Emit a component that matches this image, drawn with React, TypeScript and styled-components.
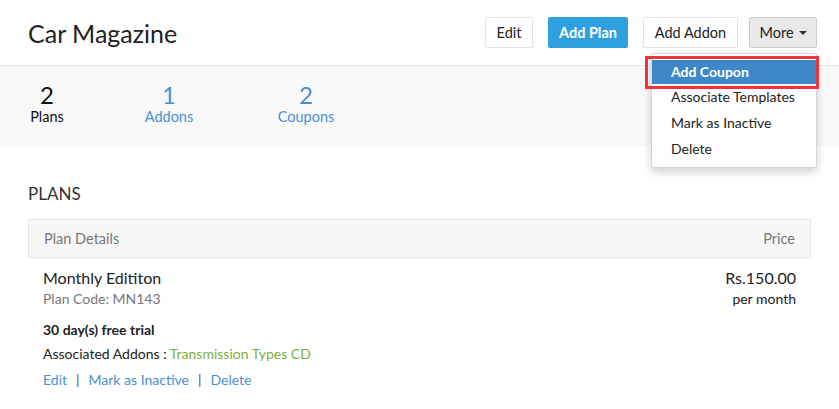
import styled, { createGlobalStyle } from "styled-components";

const GlobalStyle = createGlobalStyle`
  html, body {
    margin: 0;
    padding: 0;
    background: #ffffff;
    font-family: Lato, "Open Sans", sans-serif;
    color: #222;
  }
`;

const Page = styled.div`
  width: 839px;
  height: 409px;
  overflow: hidden;
  position: relative;
`;

const Header = styled.div`
  height: 66px;
  box-sizing: border-box;
  border-bottom: 1px solid #e8e8e8;
  display: flex;
  align-items: center;
  justify-content: space-between;
  padding: 0 22px 0 28px;
`;

const Title = styled.h1`
  margin: 0;
  font-size: 25px;
  font-weight: 400;
  color: #222;
`;

const Actions = styled.div`
  display: flex;
  align-items: center;
`;

const Btn = styled.div<{ $variant?: "primary" | "muted"; $gap?: number; $width: number }>`
  width: ${(p) => p.$width}px;
  height: 31px;
  box-sizing: border-box;
  margin-left: ${(p) => p.$gap ?? 15}px;
  display: flex;
  align-items: center;
  justify-content: center;
  font-size: 14.5px;
  border-radius: 2px;
  border: 1px solid
    ${(p) => (p.$variant === "primary" ? "#2ea0e0" : p.$variant === "muted" ? "#cdcdcd" : "#e2e2e2")};
  background: ${(p) => (p.$variant === "primary" ? "#2ea0e0" : p.$variant === "muted" ? "#e9e9e9" : "#fff")};
  color: ${(p) => (p.$variant === "primary" ? "#fff" : "#222")};
  font-weight: ${(p) => (p.$variant === "primary" ? 700 : 400)};
`;

const Caret = styled.span`
  display: inline-block;
  margin-left: 5px;
  width: 0;
  height: 0;
  border-left: 4px solid transparent;
  border-right: 4px solid transparent;
  border-top: 4px solid #333;
`;

const Stats = styled.div`
  height: 80px;
  background: #f9f9f9;
  display: flex;
  align-items: flex-start;
  padding-top: 16px;
  box-sizing: border-box;
`;

const Stat = styled.div<{ $width: number; $active?: boolean }>`
  width: ${(p) => p.$width}px;
  display: flex;
  flex-direction: column;
  align-items: center;
  color: ${(p) => (p.$active ? "#111" : "#4a8fd0")};
`;

const StatNum = styled.div`
  font-size: 24px;
  line-height: 26px;
`;

const StatLabel = styled.div`
  font-size: 14.5px;
  line-height: 18px;
`;

const Section = styled.div`
  padding: 38px 28px 0 28px;
`;

const SectionTitle = styled.div`
  font-size: 17px;
  color: #333;
  text-transform: uppercase;
  line-height: 20px;
`;

const Table = styled.div`
  margin-top: 15px;
  width: 783px;
`;

const TableHead = styled.div`
  height: 39px;
  box-sizing: border-box;
  background: #f7f7f7;
  border: 1px solid #e6e6e6;
  display: flex;
  align-items: center;
  justify-content: space-between;
  padding: 0 15px;
  font-size: 14.5px;
  color: #777;
`;

const Row = styled.div`
  display: flex;
  justify-content: space-between;
  padding: 10px 15px 0 15px;
`;

const Details = styled.div`
  display: flex;
  flex-direction: column;
`;

const PlanName = styled.div`
  font-size: 16px;
  line-height: 20px;
  color: #222;
`;

const PlanCode = styled.div`
  margin-top: 1px;
  font-size: 14px;
  line-height: 20px;
  color: #777;
`;

const Trial = styled.div`
  margin-top: 11px;
  font-size: 14px;
  font-weight: 700;
  color: #222;
  line-height: 20px;
`;

const Addons = styled.div`
  margin-top: 4px;
  font-size: 14px;
  color: #222;
  line-height: 20px;
`;

const Green = styled.span`
  color: #7bb03e;
`;

const Links = styled.div`
  margin-top: 6px;
  font-size: 14px;
  line-height: 20px;
  color: #4a8fd0;
  display: flex;
  gap: 9px;
`;

const Sep = styled.span`
  color: #555;
`;

const Price = styled.div`
  display: flex;
  flex-direction: column;
  align-items: flex-end;
`;

const Amount = styled.div`
  font-size: 16px;
  line-height: 20px;
  color: #222;
`;

const Per = styled.div`
  margin-top: 1px;
  font-size: 14px;
  line-height: 20px;
  color: #222;
`;

const Menu = styled.div`
  position: absolute;
  left: 651px;
  top: 53px;
  width: 166px;
  box-sizing: border-box;
  background: #fff;
  border: 1px solid #d6d6d6;
  border-radius: 2px;
  box-shadow: 0 4px 10px rgba(0, 0, 0, 0.18);
  padding: 6px 0 5px 0;
`;

const MenuItem = styled.div<{ $active?: boolean }>`
  height: ${(p) => (p.$active ? 24 : 26)}px;
  box-sizing: border-box;
  padding-bottom: 2px;
  display: flex;
  align-items: center;
  padding-left: 19px;
  font-size: 14px;
  color: ${(p) => (p.$active ? "#fff" : "#222")};
  background: ${(p) => (p.$active ? "#3f88c8" : "transparent")};
  font-weight: ${(p) => (p.$active ? 700 : 400)};
  position: relative;
  &::after {
    content: "";
    display: ${(p) => (p.$active ? "block" : "none")};
    position: absolute;
    left: -7px;
    right: -3px;
    top: -4px;
    bottom: -5px;
    border: 3px solid #f0323a;
  }
`;

export default function App() {
  return (
    <Page>
      <GlobalStyle />
      <Header>
        <Title>Car Magazine</Title>
        <Actions>
          <Btn $width={48}>Edit</Btn>
          <Btn $width={80} $variant="primary">
            Add Plan
          </Btn>
          <Btn $width={95}>Add Addon</Btn>
          <Btn $width={68} $variant="muted" $gap={11}>
            More <Caret />
          </Btn>
        </Actions>
      </Header>
      <Stats>
        <Stat $width={94} $active>
          <StatNum>2</StatNum>
          <StatLabel>Plans</StatLabel>
        </Stat>
        <Stat $width={150}>
          <StatNum>1</StatNum>
          <StatLabel>Addons</StatLabel>
        </Stat>
        <Stat $width={124}>
          <StatNum>2</StatNum>
          <StatLabel>Coupons</StatLabel>
        </Stat>
      </Stats>
      <Section>
        <SectionTitle>Plans</SectionTitle>
        <Table>
          <TableHead>
            <span>Plan Details</span>
            <span>Price</span>
          </TableHead>
          <Row>
            <Details>
              <PlanName>Monthly Edititon</PlanName>
              <PlanCode>Plan Code: MN143</PlanCode>
              <Trial>30 day(s) free trial</Trial>
              <Addons>
                Associated Addons : <Green>Transmission Types CD</Green>
              </Addons>
              <Links>
                <span>Edit</span>
                <Sep>|</Sep>
                <span>Mark as Inactive</span>
                <Sep>|</Sep>
                <span>Delete</span>
              </Links>
            </Details>
            <Price>
              <Amount>Rs.150.00</Amount>
              <Per>per month</Per>
            </Price>
          </Row>
        </Table>
      </Section>
      <Menu>
        <MenuItem $active>Add Coupon</MenuItem>
        <MenuItem>Associate Templates</MenuItem>
        <MenuItem>Mark as Inactive</MenuItem>
        <MenuItem>Delete</MenuItem>
      </Menu>
    </Page>
  );
}
